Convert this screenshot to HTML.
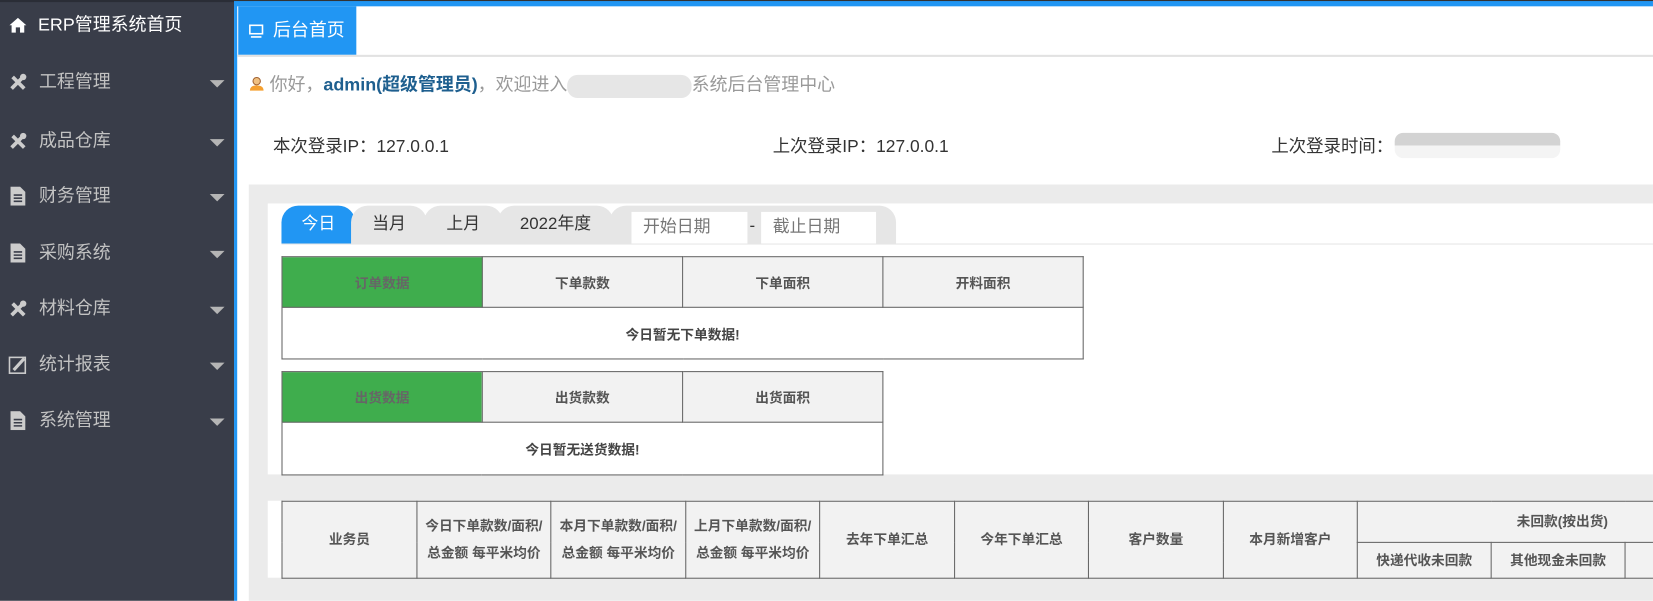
<!DOCTYPE html>
<html><head><meta charset="utf-8"><style>
*{margin:0;padding:0;box-sizing:border-box}
body{width:1653px;height:600px;overflow:hidden;position:relative;background:#fff;font-family:"Liberation Sans","Noto Sans CJK SC",sans-serif;}
#w{position:absolute;left:0;top:0;width:1568px;height:570px;transform:scale(1.0542);transform-origin:0 0;overflow:hidden;background:#fff}
.a{position:absolute}
#side{left:0;top:0;width:222px;height:570px;background:#393d49;border-top:2px solid #2a2d36}
.mi{position:absolute;left:8px;color:#c2c2c2;font-size:17px;height:24px;line-height:24px;width:205px}
.mi .ic{position:absolute;left:0;top:3px;width:18px;height:18px}
.mi span{position:absolute;left:29px}
.mi .car{position:absolute;right:0;top:10px;width:0;height:0;border-left:7px solid transparent;border-right:7px solid transparent;border-top:7px solid #b5b5b5}
table{border-collapse:collapse;position:absolute;font-size:13px;font-weight:bold;color:#555}
td{border:1px solid #666;text-align:center;background:#f2f2f2}
.tab{position:absolute;top:195px;height:36px;line-height:36px;text-align:center;font-size:16px;color:#333;background:#e6e6e6;border-radius:16px 16px 0 0}
</style></head><body><div id="w">
<div class="a" id="side">
 <div class="mi" style="top:10px;color:#fff;font-size:17px">
  <svg class="ic" viewBox="0 0 18 18"><path d="M1 9 L9 2 L17 9 L15 9 L15 16 L11 16 L11 11 L7 11 L7 16 L3 16 L3 9 Z" fill="#fff"/></svg><span style="left:28px">ERP管理系统首页</span></div>
 <div class="mi" style="top:64px"><svg class="ic" viewBox="0 0 18 18"><path d="M3 15 L14 4 M4 4 L15 15" stroke="#ccc" stroke-width="3.5"/><circle cx="14" cy="4" r="3" fill="#ccc"/></svg><span>工程管理</span><i class="car"></i></div>
 <div class="mi" style="top:120px"><svg class="ic" viewBox="0 0 18 18"><path d="M3 15 L14 4 M4 4 L15 15" stroke="#ccc" stroke-width="3.5"/><circle cx="14" cy="4" r="3" fill="#ccc"/></svg><span>成品仓库</span><i class="car"></i></div>
 <div class="mi" style="top:172px"><svg class="ic" viewBox="0 0 18 18"><path d="M2 0 H11 L16 5 V18 H2 Z" fill="#ccc"/><path d="M5 8 H13 M5 11 H13 M5 14 H13" stroke="#393d49" stroke-width="1.5"/></svg><span>财务管理</span><i class="car"></i></div>
 <div class="mi" style="top:226px"><svg class="ic" viewBox="0 0 18 18"><path d="M2 0 H11 L16 5 V18 H2 Z" fill="#ccc"/><path d="M5 8 H13 M5 11 H13 M5 14 H13" stroke="#393d49" stroke-width="1.5"/></svg><span>采购系统</span><i class="car"></i></div>
 <div class="mi" style="top:279px"><svg class="ic" viewBox="0 0 18 18"><path d="M3 15 L14 4 M4 4 L15 15" stroke="#ccc" stroke-width="3.5"/><circle cx="14" cy="4" r="3" fill="#ccc"/></svg><span>材料仓库</span><i class="car"></i></div>
 <div class="mi" style="top:332px"><svg class="ic" viewBox="0 0 18 18"><rect x="1" y="2" width="15" height="15" fill="none" stroke="#ccc" stroke-width="1.5"/><path d="M5 14 L15 3" stroke="#ccc" stroke-width="3"/></svg><span>统计报表</span><i class="car"></i></div>
 <div class="mi" style="top:385px"><svg class="ic" viewBox="0 0 18 18"><path d="M2 0 H11 L16 5 V18 H2 Z" fill="#ccc"/><path d="M5 8 H13 M5 11 H13 M5 14 H13" stroke="#393d49" stroke-width="1.5"/></svg><span>系统管理</span><i class="car"></i></div>
</div>
<div class="a" style="left:222px;top:0;width:3px;height:570px;background:#2196f3"></div>
<div class="a" style="left:222px;top:0;width:1346px;height:6px;background:#2196f3;border-top:1px solid #333"></div>
<div class="a" style="left:226px;top:6px;width:112px;height:46px;background:#2196f3;color:#fff;font-size:17px;line-height:46px">
 <svg style="position:absolute;left:10px;top:17px" width="14" height="13" viewBox="0 0 14 13"><rect x="1" y="1" width="12" height="8" fill="none" stroke="#fff" stroke-width="1.5"/><path d="M2 12 H12" stroke="#fff" stroke-width="1.5"/></svg>
 <span style="position:absolute;left:33px">后台首页</span></div>
<div class="a" style="left:225px;top:52px;width:1343px;height:2px;background:#e2e2e2"></div>
<div class="a" style="left:236px;top:69px;font-size:17px;color:#999;line-height:24px;white-space:nowrap">
 <svg width="15" height="15" viewBox="0 0 15 15" style="vertical-align:-1px"><circle cx="7.5" cy="5" r="3.5" fill="#f0c080" stroke="#a06030"/><path d="M1 14 Q1 9 7.5 9 Q14 9 14 14 Z" fill="#f5a030"/></svg>
 你好，<b style="color:#1e5f8f">admin(超级管理员)</b>，欢迎进入<span style="display:inline-block;width:118px;height:22px;vertical-align:middle;background:#e6e6e6;border-radius:10px"></span>系统后台管理中心</div>
<div class="a" style="left:259px;top:125px;font-size:16.5px;color:#333">本次登录IP：127.0.0.1</div>
<div class="a" style="left:733px;top:125px;font-size:16.5px;color:#333">上次登录IP：127.0.0.1</div>
<div class="a" style="left:1206px;top:125px;font-size:16.5px;color:#333">上次登录时间：</div>
<div class="a" style="left:1323px;top:126px;width:157px;height:24px;background:linear-gradient(#d3d3d3 50%,#f4f4f4 50%);border-radius:8px"></div>
<div class="a" style="left:236px;top:175px;width:1332px;height:395px;background:#ebebeb"></div>
<div class="a" style="left:254px;top:193px;width:1314px;height:257px;background:#fff"></div>
<div class="a" style="left:267px;top:231px;width:1301px;height:1px;background:#e6e6e6"></div>
<div class="tab" style="left:267px;width:70px;background:#2196f3;color:#fff">今日</div>
<div class="tab" style="left:333px;width:72px">当月</div>
<div class="tab" style="left:402px;width:75px">上月</div>
<div class="tab" style="left:472px;width:110px">2022年度</div>
<div class="tab" style="left:578px;width:272px"></div>
<div class="a" style="left:599px;top:201px;width:110px;height:30px;background:#fff;font-size:16px;color:#777;line-height:30px;padding-left:11px">开始日期</div>
<div class="a" style="left:711px;top:201px;font-size:16px;color:#333;line-height:28px">-</div>
<div class="a" style="left:722px;top:201px;width:109px;height:30px;background:#fff;font-size:16px;color:#777;line-height:30px;padding-left:11px">截止日期</div>
<table style="left:267px;top:243px;width:761px">
<tr style="height:48px"><td style="background:#3fad4d;color:#666;width:25%">订单数据</td><td>下单款数</td><td>下单面积</td><td>开料面积</td></tr>
<tr style="height:49px"><td colspan="4" style="background:#fff;color:#444">今日暂无下单数据!</td></tr></table>
<table style="left:267px;top:352px;width:571px">
<tr style="height:48px"><td style="background:#3fad4d;color:#666;width:33.3%">出货数据</td><td>出货款数</td><td>出货面积</td></tr>
<tr style="height:50px"><td colspan="3" style="background:#fff;color:#444">今日暂无送货数据!</td></tr></table>
<div class="a" style="left:254px;top:475px;width:1314px;height:73px;background:#fff"></div>
<table style="left:267px;top:475px;width:1410px;line-height:26px">
<tr style="height:39px"><td rowspan="2" style="width:128px">业务员</td><td rowspan="2" style="width:127px">今日下单款数/面积/<br>总金额 每平米均价</td><td rowspan="2" style="width:128px">本月下单款数/面积/<br>总金额 每平米均价</td><td rowspan="2" style="width:127px">上月下单款数/面积/<br>总金额 每平米均价</td><td rowspan="2" style="width:128px">去年下单汇总</td><td rowspan="2" style="width:127px">今年下单汇总</td><td rowspan="2" style="width:128px">客户数量</td><td rowspan="2" style="width:127px">本月新增客户</td><td colspan="3">未回款(按出货)</td></tr>
<tr style="height:34px"><td style="width:127px">快递代收未回款</td><td style="width:127px">其他现金未回款</td><td></td></tr></table>
</div></body></html>
